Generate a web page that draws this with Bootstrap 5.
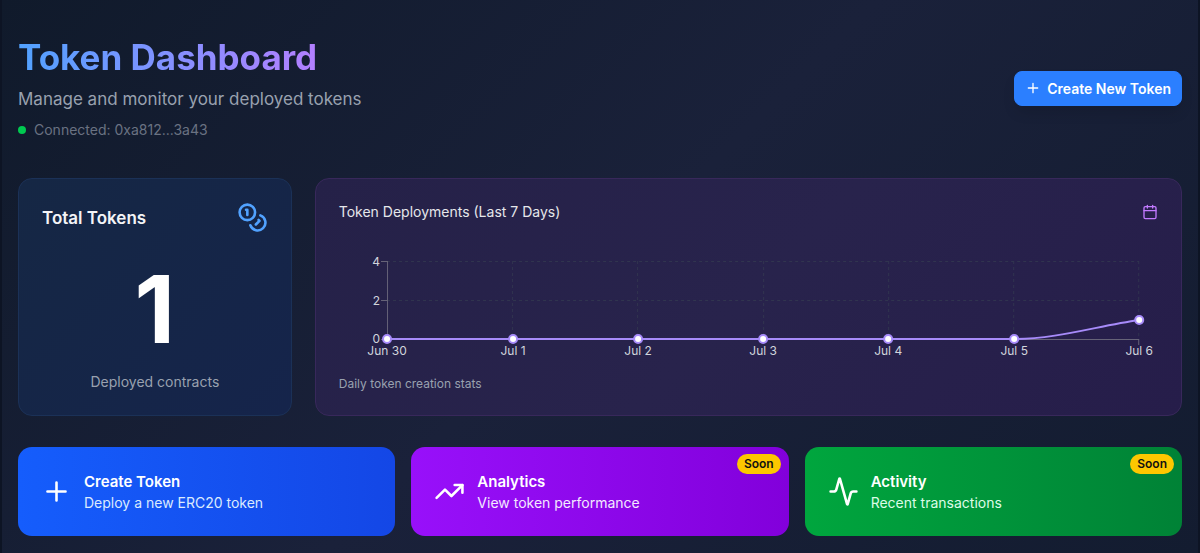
<!DOCTYPE html>
<html lang="en">
<head>
<meta charset="utf-8">
<meta name="viewport" content="width=device-width, initial-scale=1">
<title>Token Dashboard</title>
<link href="https://cdn.jsdelivr.net/npm/bootstrap@5.3.0/dist/css/bootstrap.min.css" rel="stylesheet">
<style>
  body { font-family: Inter, "Liberation Sans", sans-serif; background: #0d1424; color: #fff; }
  .shell { min-height: 100vh; margin: 0 2px; padding: 36px 16px 16px;
    background: linear-gradient(135deg, #101a2b 0%, #1a213a 50%, #131c30 100%); }
  .page-title { font-size: 35px; line-height: 42px; font-weight: 700; margin-bottom: 7px;
    background: linear-gradient(90deg, #51a2ff, #c27aff); -webkit-background-clip: text; background-clip: text; color: transparent; }
  .subtitle { font-size: 17px; line-height: 28px; margin-bottom: 7px; color: #99a1af; }
  .status { font-size: 14px; line-height: 20px; color: #6a7282; }
  .dot { width: 8px; height: 8px; background: #00c950; }
  .btn-create { --bs-btn-color: #fff; --bs-btn-bg: #2b7fff; --bs-btn-border-color: #2b7fff; --bs-btn-hover-color: #fff; --bs-btn-hover-bg: #155dfc;
    --bs-btn-font-size: 14px; --bs-btn-font-weight: 600; --bs-btn-line-height: 21px; --bs-btn-padding-x: 10px; --bs-btn-padding-y: 6px; --bs-btn-border-radius: 8px;
    gap: 6px; box-shadow: 0 8px 14px -2px rgba(0,0,0,.12); }
  .stats { display: grid; grid-template-columns: repeat(4, minmax(0, 1fr)); gap: 23px; margin: 38px 0 31px; }
  .stats .span-3 { grid-column: span 3; }
  .panel { border: 1px solid; border-radius: 14px; padding: 23px; }
  .panel-blue { background: linear-gradient(135deg, #152744, #15244b); border-color: #1b3157; }
  .panel-purple { background: linear-gradient(135deg, #252148, #28234c 50%, #261d4a); border-color: #38285b; }
  .panel h2 { font-size: 17px; line-height: 28px; font-weight: 600; color: #f3f4f6; }
  .panel-purple h2 { font-size: 14px; line-height: 20px; font-weight: 400; color: #e5e7eb; }
  .total { font-size: 94px; line-height: 94px; font-weight: 700; }
  .note { font-size: 14px; line-height: 20px; color: #99a1af; }
  .note-sm { font-size: 12px; line-height: 16px; margin-top: 12px; color: #99a1af; }
  .chart text { font-size: 12px; fill: #d1d5dc; }
  .actions { display: grid; grid-template-columns: repeat(3, minmax(0, 1fr)); gap: 16px; }
  .tile { border: 0; border-radius: 14px; padding: 23px; gap: 12px; color: #fff; }
  .tile-blue { background: linear-gradient(90deg, #155dfc, #1447e6); }
  .tile-purple { background: linear-gradient(90deg, #9810fa, #8200db); }
  .tile-green { background: linear-gradient(90deg, #00a63e, #008236); }
  .tile-name { font-size: 15px; line-height: 23px; font-weight: 600; }
  .tile-text { font-size: 14px; line-height: 20px; }
  .tile-blue .tile-text { color: #dbeafe; }
  .tile-purple .tile-text { color: #f3e8ff; }
  .tile-green .tile-text { color: #dcfce7; }
  .soon { top: 7px; right: 8px; padding: 2px 7px; font-size: 12px; line-height: 16px; font-weight: 600; color: #111; background: #fdc700; }
  .ico { fill: none; stroke: currentColor; stroke-width: 2; stroke-linecap: round; stroke-linejoin: round; flex: none; }
  .ico-blue { color: #51a2ff; }
  .ico-purple { color: #c27aff; }
</style>
</head>
<body>
<main class="shell">
  <header class="d-flex justify-content-between align-items-center">
    <div>
      <h1 class="page-title">Token Dashboard</h1>
      <p class="subtitle">Manage and monitor your deployed tokens</p>
      <div class="status d-flex align-items-center gap-2"><span class="dot rounded-circle"></span>Connected: 0xa812...3a43</div>
    </div>
    <button type="button" class="btn btn-create d-flex align-items-center">
      <svg class="ico" width="16" height="16" viewBox="0 0 24 24" aria-hidden="true"><path d="M5 12h14M12 5v14"/></svg>
      Create New Token
    </button>
  </header>

  <section class="stats">
    <div class="panel panel-blue d-flex flex-column">
      <div class="d-flex justify-content-between align-items-center">
        <h2 class="mb-0">Total Tokens</h2>
        <svg class="ico ico-blue" width="31" height="31" viewBox="0 0 24 24" aria-hidden="true"><circle cx="8" cy="8" r="6"/><path d="M18.09 10.37A6 6 0 1 1 10.34 18M7 6h1v4M16.71 13.88l.7.71-2.82 2.82"/></svg>
      </div>
      <div class="total text-center mt-auto mb-3">1</div>
      <div class="note text-center">Deployed contracts</div>
    </div>
    <div class="panel panel-purple span-3">
      <div class="d-flex justify-content-between align-items-center mb-3">
        <h2 class="mb-0">Token Deployments (Last 7 Days)</h2>
        <svg class="ico ico-purple" width="16" height="16" viewBox="0 0 24 24" aria-hidden="true"><path d="M8 2v4M16 2v4M3 10h18"/><rect x="3" y="4" width="18" height="18" rx="2"/></svg>
      </div>
      <svg class="chart d-block w-100" viewBox="0 0 819 126" role="img" aria-label="Token deployments per day">
        <g stroke="#374151" stroke-opacity=".6" stroke-dasharray="3 3" fill="none">
          <path d="M48 23.5H800M48 62.5H800M173.500 23V101M298.500 23V101M424.500 23V101M549.500 23V101M674.500 23V101M799.500 23V101"/>
        </g>
        <path d="M42 23.5H48.5V101M42 62.5H48M42 101.5H799.5V107" stroke="#666378" fill="none"/>
        <g text-anchor="end"><text x="41" y="28">4</text><text x="41" y="67">2</text><text x="41" y="105">0</text></g>
        <g text-anchor="middle">
          <text x="48" y="117">Jun 30</text><text x="174" y="117">Jul 1</text><text x="299" y="117">Jul 2</text><text x="424" y="117">Jul 3</text><text x="549" y="117">Jul 4</text><text x="675" y="117">Jul 5</text><text x="800" y="117">Jul 6</text>
        </g>
        <path d="M48 101H675C717 101 758 88 800 82" stroke="#a78bfa" stroke-width="2" fill="none"/>
        <g fill="#fff" stroke="#a78bfa" stroke-width="2">
          <circle cx="48" cy="101" r="4"/><circle cx="174" cy="101" r="4"/><circle cx="299" cy="101" r="4"/><circle cx="424" cy="101" r="4"/><circle cx="549" cy="101" r="4"/><circle cx="675" cy="101" r="4"/><circle cx="800" cy="82" r="4"/>
        </g>
      </svg>
      <div class="note-sm">Daily token creation stats</div>
    </div>
  </section>

  <section class="actions">
    <button type="button" class="tile tile-blue d-flex align-items-center text-start">
      <svg class="ico" width="31" height="31" viewBox="0 0 24 24" aria-hidden="true"><path d="M5 12h14M12 5v14"/></svg>
      <span><span class="tile-name d-block">Create Token</span><span class="tile-text d-block">Deploy a new ERC20 token</span></span>
    </button>
    <button type="button" class="tile tile-purple d-flex align-items-center text-start position-relative">
      <svg class="ico" width="31" height="31" viewBox="0 0 24 24" aria-hidden="true"><path d="M16 7h6v6"/><path d="m22 7-8.5 8.5-5-5L2 17"/></svg>
      <span><span class="tile-name d-block">Analytics</span><span class="tile-text d-block">View token performance</span></span>
      <span class="soon position-absolute rounded-pill">Soon</span>
    </button>
    <button type="button" class="tile tile-green d-flex align-items-center text-start position-relative">
      <svg class="ico" width="31" height="31" viewBox="0 0 24 24" aria-hidden="true"><path d="M22 12h-2.48a2 2 0 0 0-1.93 1.46l-2.35 8.36a.25.25 0 0 1-.48 0L9.24 2.18a.25.25 0 0 0-.48 0l-2.35 8.36A2 2 0 0 1 4.49 12H2"/></svg>
      <span><span class="tile-name d-block">Activity</span><span class="tile-text d-block">Recent transactions</span></span>
      <span class="soon position-absolute rounded-pill">Soon</span>
    </button>
  </section>
</main>
<script src="https://cdn.jsdelivr.net/npm/bootstrap@5.3.0/dist/js/bootstrap.bundle.min.js"></script>
</body>
</html>
